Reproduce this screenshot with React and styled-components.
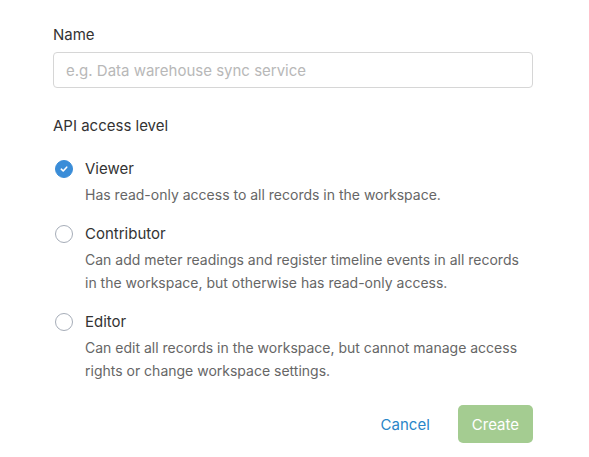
import React, { useState } from "react";
import styled, { createGlobalStyle } from "styled-components";

const GlobalStyle = createGlobalStyle`
  body {
    margin: 0;
    background: #fff;
    font-family: Inter, "Liberation Sans", Arial, sans-serif;
    -webkit-font-smoothing: antialiased;
  }
`;

const LEVELS = [
  {
    id: "viewer",
    title: "Viewer",
    text: "Has read-only access to all records in the workspace.",
  },
  {
    id: "contributor",
    title: "Contributor",
    text: "Can add meter readings and register timeline events in all records in the workspace, but otherwise has read-only access.",
  },
  {
    id: "editor",
    title: "Editor",
    text: "Can edit all records in the workspace, but cannot manage access rights or change workspace settings.",
  },
];

const CheckIcon = () => (
  <svg width="10" height="10" viewBox="0 0 10 10" fill="none">
    <path
      d="M2.3 5.2 L4.2 7 L7.7 3.2"
      stroke="#fff"
      strokeWidth="1.6"
      strokeLinecap="round"
      strokeLinejoin="round"
    />
  </svg>
);

const App = () => {
  const [name, setName] = useState("");
  const [level, setLevel] = useState("viewer");

  return (
    <>
      <GlobalStyle />
      <Form onSubmit={(e) => e.preventDefault()}>
        <Label htmlFor="token-name">Name</Label>
        <Input
          id="token-name"
          placeholder="e.g. Data warehouse sync service"
          value={name}
          onChange={(e) => setName(e.target.value)}
        />

        <SectionTitle>API access level</SectionTitle>
        <OptionList>
          {LEVELS.map((l) => (
            <Option key={l.id} onClick={() => setLevel(l.id)}>
              <Radio checked={level === l.id}>
                {level === l.id && <CheckIcon />}
              </Radio>
              <OptionBody>
                <OptionTitle>{l.title}</OptionTitle>
                <OptionText>{l.text}</OptionText>
              </OptionBody>
            </Option>
          ))}
        </OptionList>

        <Footer>
          <CancelButton type="button">Cancel</CancelButton>
          <CreateButton type="submit" disabled={!name}>
            Create
          </CreateButton>
        </Footer>
      </Form>
    </>
  );
};

export default App;

const Form = styled.form`
  display: flex;
  flex-direction: column;
  padding: 25px 56px 0 53px;
`;

const Label = styled.label`
  font-size: 15px;
  line-height: 20px;
  color: #333;
`;

const Input = styled.input`
  margin-top: 7px;
  height: 36px;
  box-sizing: border-box;
  padding: 0 12px;
  border: 1px solid #d6d6d6;
  border-radius: 4px;
  font-family: inherit;
  font-size: 15px;
  color: #333;
  outline: none;

  &::placeholder {
    color: #b8b8b8;
  }
`;

const SectionTitle = styled.div`
  margin-top: 28px;
  font-size: 15px;
  line-height: 20px;
  color: #333;
`;

const OptionList = styled.div`
  display: flex;
  flex-direction: column;
  gap: 17px;
  margin-top: 22px;
`;

const Option = styled.div`
  display: flex;
  align-items: flex-start;
  cursor: pointer;
`;

const Radio = styled.span`
  width: 18px;
  height: 18px;
  box-sizing: border-box;
  margin: 2px 12px 0 2px;
  flex-shrink: 0;
  border-radius: 50%;
  display: flex;
  align-items: center;
  justify-content: center;
  background: ${({ checked }) => (checked ? "#3a8dd8" : "#fff")};
  border: 1px solid ${({ checked }) => (checked ? "#3a8dd8" : "#a6adb8")};
`;

const OptionBody = styled.div`
  display: flex;
  flex-direction: column;
`;

const OptionTitle = styled.div`
  font-size: 15px;
  line-height: 22px;
  color: #333;
`;

const OptionText = styled.div`
  margin-top: 3px;
  font-size: 14px;
  line-height: 23px;
  color: #666;
`;

const Footer = styled.div`
  display: flex;
  justify-content: flex-end;
  align-items: center;
  gap: 28px;
  margin-top: 23px;
`;

const CancelButton = styled.button`
  border: none;
  background: none;
  padding: 0;
  font-family: inherit;
  font-size: 15px;
  color: #2a86c8;
  cursor: pointer;
`;

const CreateButton = styled.button`
  height: 38px;
  padding: 0 14px;
  border: none;
  border-radius: 5px;
  background: #3f9a3a;
  font-family: inherit;
  font-size: 15px;
  color: #fff;
  cursor: pointer;

  &:disabled {
    background: #a4cc91;
    cursor: default;
  }
`;
